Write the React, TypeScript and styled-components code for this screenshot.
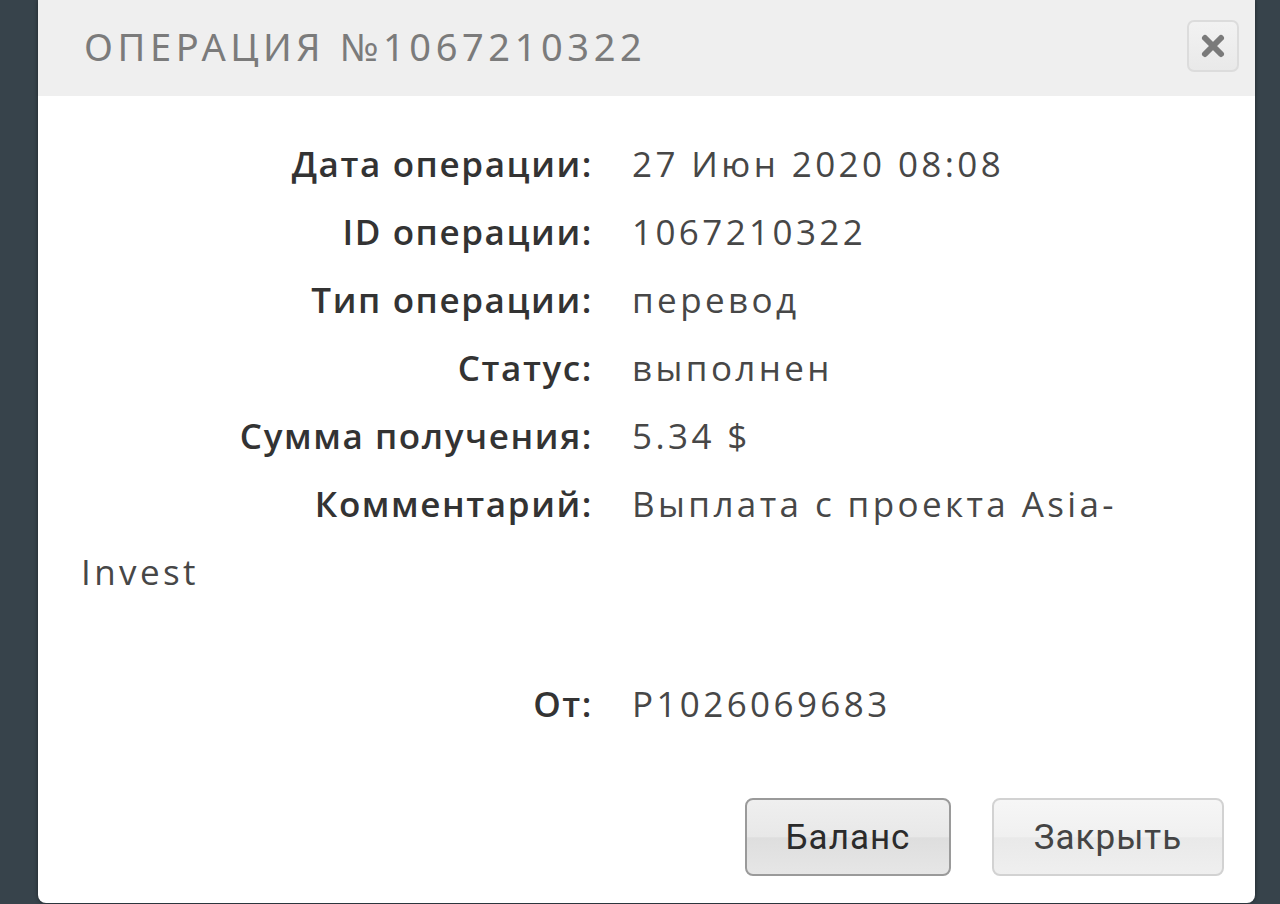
import React from "react";
import styled, { createGlobalStyle } from "styled-components";

const Global = createGlobalStyle`
  html, body { margin: 0; padding: 0; }
  body { background: #37434b; overflow: hidden; }
`;

const Page = styled.div`
  width: 1280px;
  height: 904px;
  background: #37434b;
  display: flex;
  align-items: flex-start;
  padding-left: 38px;
  box-sizing: border-box;
`;

const Dialog = styled.div`
  width: 1217px;
  height: 903px;
  background: #ffffff;
  border-radius: 0 0 8px 8px;
  box-shadow: 0 0 4px rgba(0, 0, 0, 0.45);
  display: flex;
  flex-direction: column;
  overflow: hidden;
`;

const Header = styled.div`
  height: 96px;
  background: #efefef;
  display: flex;
  align-items: center;
  justify-content: space-between;
  padding: 0 16px 0 46px;
  box-sizing: border-box;
  flex-shrink: 0;
`;

const Title = styled.div`
  font-family: "Noto Sans", "Open Sans", sans-serif;
  font-size: 38px;
  font-weight: 400;
  letter-spacing: 4.6px;
  color: #7b7b7b;
  text-transform: uppercase;
  margin-top: -4px;
`;

const CloseBtn = styled.button`
  width: 52px;
  height: 52px;
  border: 2px solid #dcdcdc;
  border-radius: 7px;
  background: linear-gradient(#f2f2f2, #e9e9e9);
  display: flex;
  align-items: center;
  justify-content: center;
  padding: 0;
  margin-top: -4px;
`;

const Body = styled.div`
  padding: 34px 40px 0 43px;
  flex: 1;
  font-family: "Open Sans", "Noto Sans", sans-serif;
  font-size: 35px;
  color: #444;
`;

const Row = styled.div<{ $extra?: number }>`
  line-height: 68px;
  margin-bottom: ${(p) => p.$extra ?? 0}px;
`;

const Label = styled.span`
  display: inline-block;
  width: 512px;
  text-align: right;
  margin-right: 39px;
  font-weight: 600;
  color: #333;
  letter-spacing: 1.6px;
`;

const Value = styled.span`
  font-weight: 400;
  color: #474747;
  letter-spacing: 3.4px;
`;

const Footer = styled.div`
  display: flex;
  justify-content: flex-end;
  gap: 41px;
  padding: 0 31px 27px 0;
`;

const Button = styled.button<{ $primary?: boolean }>`
  height: 78px;
  min-width: ${(p) => (p.$primary ? 206 : 232)}px;
  border-radius: 8px;
  border: 2px solid ${(p) => (p.$primary ? "#9a9a9a" : "#d2d2d2")};
  background: ${(p) =>
    p.$primary
      ? "linear-gradient(#efefef 0%, #e8e8e8 50%, #dedede 51%, #e6e6e6 100%)"
      : "linear-gradient(#f6f6f6 0%, #f0f0f0 50%, #e9e9e9 51%, #efefef 100%)"};
  font-family: Roboto, "Noto Sans", sans-serif;
  font-size: 35px;
  letter-spacing: 1px;
  color: ${(p) => (p.$primary ? "#2b2b2b" : "#444")};
  padding: 0;
`;

const rows: [string, string][] = [
  ["Дата операции:", "27 Июн 2020 08:08"],
  ["ID операции:", "1067210322"],
  ["Тип операции:", "перевод"],
  ["Статус:", "выполнен"],
  ["Сумма получения:", "5.34 $"],
];

export default function App() {
  return (
    <>
      <Global />
      <Page>
        <Dialog>
          <Header>
            <Title>Операция №1067210322</Title>
            <CloseBtn aria-label="close">
              <svg width="26" height="26" viewBox="0 0 26 26">
                <path
                  d="M5 5 L21 21 M21 5 L5 21"
                  stroke="#7a7a7a"
                  strokeWidth="6"
                  strokeLinecap="round"
                />
              </svg>
            </CloseBtn>
          </Header>
          <Body>
            {rows.map(([l, v]) => (
              <Row key={l}>
                <Label>{l}</Label>
                <Value>{v}</Value>
              </Row>
            ))}
            <Row $extra={64}>
              <Label>Комментарий:</Label>
              <Value>Выплата с проекта Asia-Invest</Value>
            </Row>
            <Row>
              <Label>От:</Label>
              <Value>P1026069683</Value>
            </Row>
          </Body>
          <Footer>
            <Button $primary>Баланс</Button>
            <Button>Закрыть</Button>
          </Footer>
        </Dialog>
      </Page>
    </>
  );
}
